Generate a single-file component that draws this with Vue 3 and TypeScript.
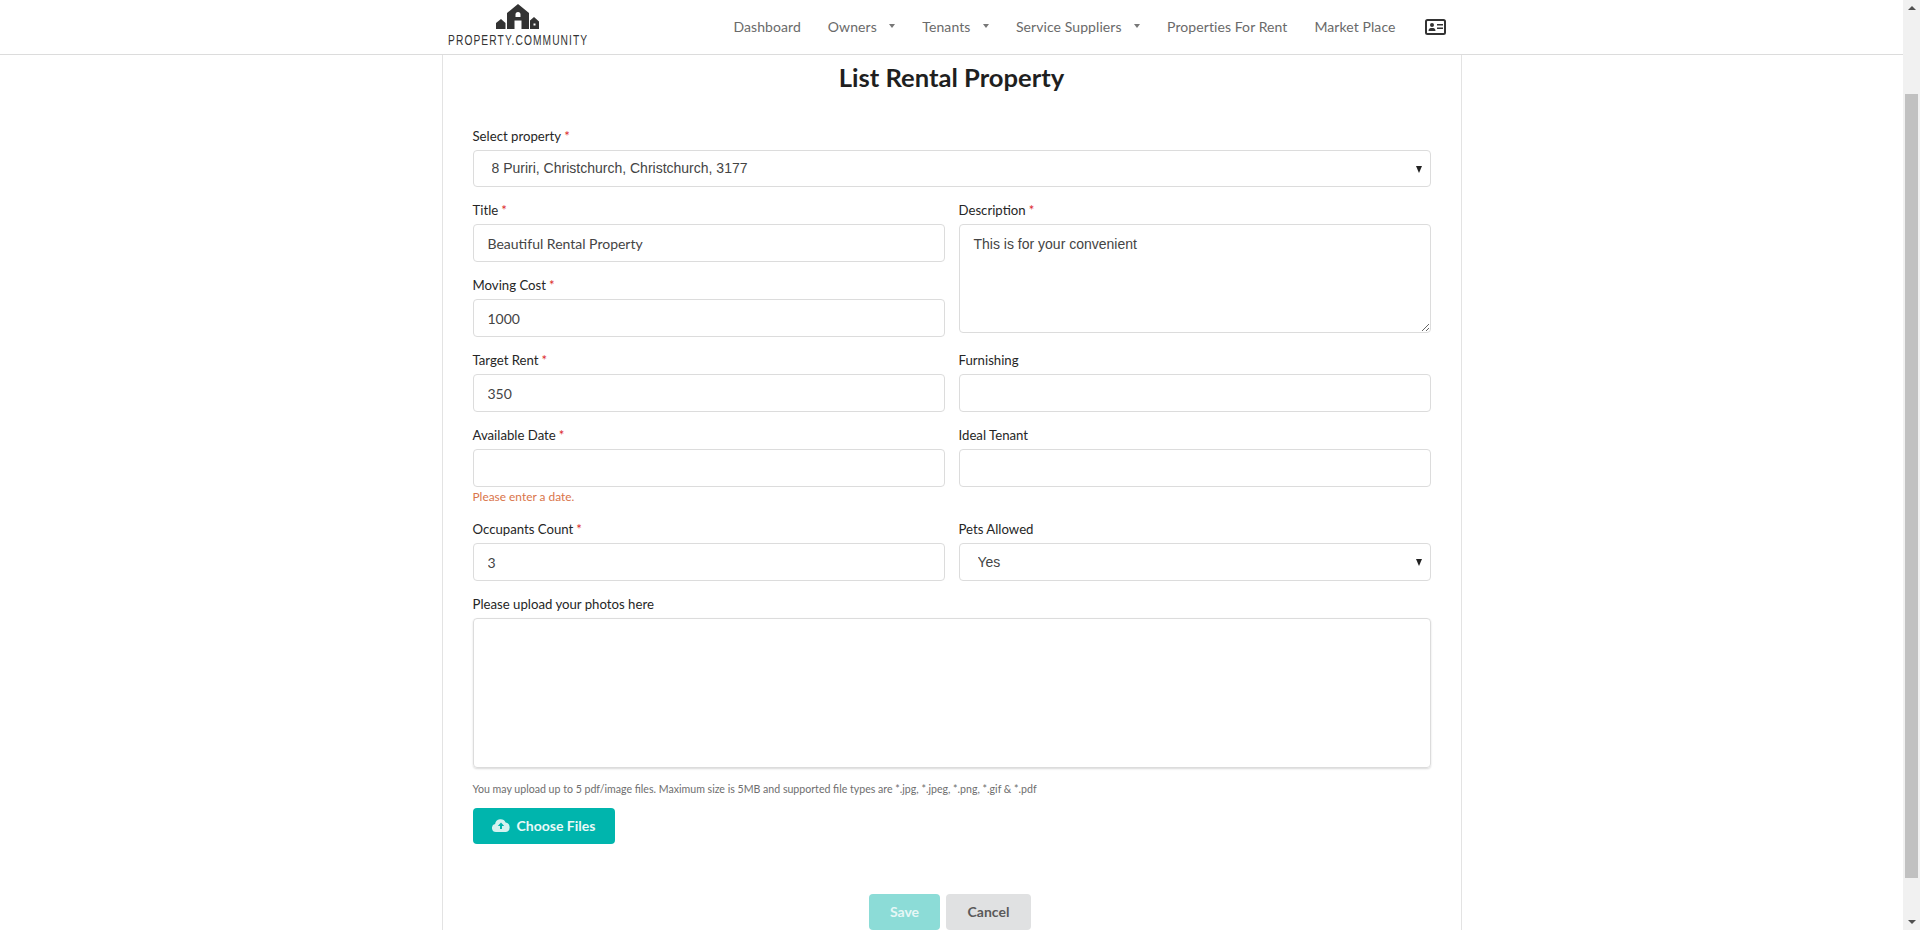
<script setup lang="ts">
interface NavItem {
  label: string
  caret?: boolean
}

const nav: NavItem[] = [
  { label: 'Dashboard' },
  { label: 'Owners', caret: true },
  { label: 'Tenants', caret: true },
  { label: 'Service Suppliers', caret: true },
  { label: 'Properties For Rent' },
  { label: 'Market Place' },
]
</script>

<template>
  <div class="page">
    <div class="main">
      <header class="head">
        <div class="head__inner">
          <a class="logo">
            <svg class="logo__mark" width="44" height="26" viewBox="0 0 44 26">
              <path fill="#333" fill-rule="evenodd" d="M22 0 33 9V25H11V9ZM19.500 13V10.500a2.500 2.500 0 0 1 5 0V13ZM18.500 16.500V25H25.500V16.500Z" />
              <path fill="#333" d="M0 19 5 15 9.500 19V25H0Z" />
              <path fill="#333" fill-rule="evenodd" d="M34 16.500 38 13 43 17.500V25H34ZM37.500 19.500V21.500H39.500V19.500Z" />
            </svg>
            <span class="logo__text">PROPERTY.COMMUNITY</span>
          </a>
          <nav class="nav">
            <a v-for="item in nav" :key="item.label" class="nav__item">
              {{ item.label }}
              <i v-if="item.caret" class="nav__caret" />
            </a>
            <svg class="nav__card" width="21" height="16" viewBox="0 0 21 16">
              <rect x="1" y="1" width="19" height="14" rx="1.500" fill="none" stroke="#333" stroke-width="2" />
              <circle cx="7" cy="6" r="2" fill="#333" />
              <path fill="#333" d="M3.500 12C3.500 9.500 5 9 7 9s3.500.5 3.500 3Z" />
              <rect x="12" y="5" width="6" height="1.500" fill="#333" />
              <rect x="12" y="8.500" width="6" height="1.500" fill="#333" />
            </svg>
          </nav>
        </div>
      </header>

      <main class="panel">
        <h1 class="panel__title">List Rental Property</h1>
        <form class="form" @submit.prevent>
          <div class="field">
            <label class="field__label">Select property<em>*</em></label>
            <div class="select">
              <select class="input input--arial input--short">
                <option>8 Puriri, Christchurch, Christchurch, 3177</option>
              </select>
            </div>
          </div>

          <div class="row">
            <div class="col">
              <div class="field">
                <label class="field__label">Title<em>*</em></label>
                <input class="input" type="text" value="Beautiful Rental Property">
              </div>
              <div class="field">
                <label class="field__label">Moving Cost<em>*</em></label>
                <input class="input" type="text" value="1000">
              </div>
            </div>
            <div class="col">
              <div class="field">
                <label class="field__label">Description<em>*</em></label>
                <textarea class="input input--arial textarea">This is for your convenient</textarea>
              </div>
            </div>
          </div>

          <div class="row">
            <div class="col field">
              <label class="field__label">Target Rent<em>*</em></label>
              <input class="input" type="text" value="350">
            </div>
            <div class="col field">
              <label class="field__label">Furnishing</label>
              <input class="input" type="text">
            </div>
          </div>

          <div class="row">
            <div class="col field">
              <label class="field__label">Available Date<em>*</em></label>
              <input class="input" type="text">
              <div class="field__error">Please enter a date.</div>
            </div>
            <div class="col field">
              <label class="field__label">Ideal Tenant</label>
              <input class="input" type="text">
            </div>
          </div>

          <div class="row">
            <div class="col field">
              <label class="field__label">Occupants Count<em>*</em></label>
              <input class="input" type="text" value="3">
            </div>
            <div class="col field">
              <label class="field__label">Pets Allowed</label>
              <div class="select">
                <select class="input input--arial">
                  <option>Yes</option>
                </select>
              </div>
            </div>
          </div>

          <label class="field__label">Please upload your photos here</label>
          <div class="upload" />
          <p class="hint">You may upload up to 5 pdf/image files. Maximum size is 5MB and supported file types are *.jpg, *.jpeg, *.png, *.gif &amp; *.pdf</p>
          <button type="button" class="btn btn--teal">
            <svg width="18" height="14" viewBox="0 0 18 14">
              <path fill="#d5f2f0" fill-rule="evenodd" d="M4 14a4 4 0 0 1-.9-7.900A5.500 5.500 0 0 1 13.600 4.600 4.800 4.800 0 0 1 14 14ZM9 4.500 5.800 8H8v3h2V8h2.200Z" />
            </svg>
            Choose Files
          </button>

          <div class="actions">
            <button type="button" class="btn btn--save">Save</button>
            <button type="button" class="btn btn--cancel">Cancel</button>
          </div>
        </form>
      </main>
    </div>

    <div class="scrollbar">
      <i class="scrollbar__up" />
      <div class="scrollbar__track"><div class="scrollbar__thumb" /></div>
      <i class="scrollbar__down" />
    </div>
  </div>
</template>

<style scoped>
.page {
  display: flex;
  height: 930px;
  overflow: hidden;
  background: #fff;
  font-family: Lato, "Liberation Sans", sans-serif;
  color: #333;
}

.main {
  flex: 1;
  min-width: 0;
}

.head {
  height: 55px;
  box-sizing: border-box;
  border-bottom: 1px solid #dcdcdc;
}

.head__inner {
  width: 1020px;
  height: 54px;
  margin: 0 auto;
  display: flex;
  justify-content: space-between;
  padding: 0 16px 0 6px;
  box-sizing: border-box;
}

.logo {
  width: 140px;
  display: flex;
  flex-direction: column;
  align-items: center;
  padding-top: 4px;
}

.logo__mark {
  display: block;
}

.logo__text {
  align-self: flex-start;
  font-family: "Liberation Sans", sans-serif;
  font-size: 14px;
  line-height: 16px;
  letter-spacing: 1.500px;
  color: #333;
  margin-top: 2px;
  white-space: nowrap;
  transform: scaleX(0.73);
  transform-origin: left center;
}

.nav {
  display: flex;
  align-items: center;
  gap: 27px;
  height: 52px;
}

.nav__item {
  display: flex;
  align-items: center;
  font-size: 14px;
  letter-spacing: 0.080px;
  color: #6a6a6a;
  white-space: nowrap;
}

.nav__caret {
  flex: none;
  width: 0;
  height: 0;
  margin: 0 0 0 12.500px;
  border-style: solid;
  border-color: #777 transparent transparent;
  border-width: 4px 3.500px 0;
}

.nav__card {
  margin: 2px 0 0 2px;
}

.panel {
  width: 1020px;
  margin: 0 auto;
  box-sizing: border-box;
  border-left: 1px solid #e3e3e3;
  border-right: 1px solid #e3e3e3;
  padding: 0 30px;
  height: 875px;
}

.panel__title {
  margin: 0;
  padding-top: 7px;
  height: 72px;
  box-sizing: border-box;
  text-align: center;
  font-size: 25.600px;
  line-height: 30px;
  font-weight: 700;
  color: #1f1f1f;
}

.row {
  display: flex;
  gap: 14px;
}

.col {
  flex: 1;
  min-width: 0;
}

.field {
  margin-bottom: 14px;
}

.field__label {
  display: block;
  height: 18px;
  margin-bottom: 5px;
  font-size: 13.200px;
  line-height: 18px;
  color: #262626;
}

.field__label em {
  font-style: normal;
  color: #db2828;
  margin-left: 3px;
}

.field__error {
  height: 19px;
  font-size: 11.900px;
  line-height: 19px;
  color: #d9744a;
}

.input {
  display: block;
  width: 100%;
  height: 38px;
  box-sizing: border-box;
  border: 1px solid #dcdcdc;
  border-radius: 4px;
  background: #fff;
  padding: 0 14px;
  font-family: Lato, "Liberation Sans", sans-serif;
  font-size: 14px;
  color: #444;
  outline: none;
}

.input--arial {
  font-family: "Liberation Sans", Arial, sans-serif;
}

.input--short {
  height: 37px;
  padding-bottom: 2px;
}

.select {
  position: relative;
}

.select select {
  appearance: none;
  padding-left: 18px;
}

.select::after {
  content: "";
  position: absolute;
  right: 9px;
  top: 50%;
  margin-top: -3px;
  border: 3px solid transparent;
  border-top: 7px solid #222;
  border-bottom: 0;
}

.textarea {
  height: 109px;
  padding: 12px 14px;
  resize: vertical;
  line-height: 15px;
  margin-bottom: 1px;
}

.upload {
  height: 150px;
  box-sizing: border-box;
  border: 1px solid #dcdcdc;
  border-radius: 4px;
  box-shadow: 0 1px 2px rgba(0, 0, 0, 0.15);
}

.hint {
  margin: 12px 0 10px;
  font-size: 10.600px;
  line-height: 18px;
  color: #6e6e6e;
}

.btn {
  border: 0;
  border-radius: 4px;
  font-family: Lato, "Liberation Sans", sans-serif;
  font-size: 14px;
  font-weight: 700;
  height: 36px;
  padding: 0 0 2px;
  display: inline-flex;
  align-items: center;
  justify-content: center;
}

.btn--teal {
  width: 142px;
  gap: 7px;
  background: #00b5ad;
  color: #e9f9f8;
}

.actions {
  display: flex;
  justify-content: center;
  gap: 6px;
  margin-top: 50px;
  padding-right: 3px;
}

.btn--save {
  width: 71px;
  background: #8cdcd7;
  color: #e6f7f6;
}

.btn--cancel {
  width: 85px;
  background: #e0e1e2;
  color: #5a5a5a;
}

.scrollbar {
  flex: 0 0 17px;
  background: #f1f1f1;
  display: flex;
  flex-direction: column;
  align-items: center;
}

.scrollbar__up,
.scrollbar__down {
  flex: 0 0 auto;
  border: 4px solid transparent;
}

.scrollbar__up {
  margin-top: 6px;
  border-bottom: 4px solid #505050;
  border-top: 0;
}

.scrollbar__down {
  margin-bottom: 6px;
  border-top: 4px solid #505050;
  border-bottom: 0;
}

.scrollbar__track {
  flex: 1;
  width: 100%;
  padding-top: 84px;
  padding-bottom: 42px;
  box-sizing: border-box;
}

.scrollbar__thumb {
  height: 100%;
  margin: 0 2px;
  background: #c1c1c1;
}
</style>

<style>
html,
body {
  margin: 0;
  overflow: hidden;
}
</style>
